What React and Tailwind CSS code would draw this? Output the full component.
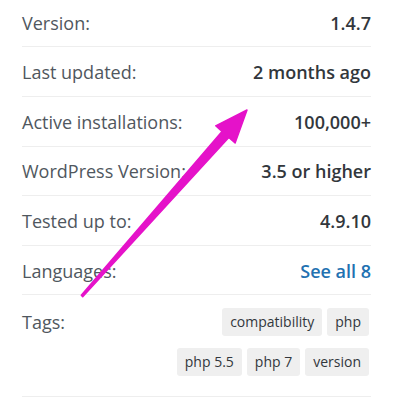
import React from 'react';

// Plugin meta sidebar: label/value rows, tag pills, and a highlight arrow on top.
const ROWS = [
  { label: 'Version:', value: '1.4.7' },
  { label: 'Last updated:', value: '2 months ago' },
  { label: 'Active installations:', value: '100,000+' },
  { label: 'WordPress Version:', value: '3.5 or higher' },
  { label: 'Tested up to:', value: '4.9.10' },
  { label: 'Languages:', value: 'See all 8', link: true },
];

const TAGS = ['compatibility', 'php', 'php 5.5', 'php 7', 'version'];

function MetaRow({ label, value, link }) {
  return (
    <li className="flex items-center justify-between h-[49.6px] pt-[2px] border-b border-[#eeeeee]">
      <span className="text-[#50575e]">{label}</span>
      {link ? (
        <a href="#" className="font-semibold text-[#2271b1]">{value}</a>
      ) : (
        <strong className="font-semibold text-[#32373c]">{value}</strong>
      )}
    </li>
  );
}

function Arrow() {
  return (
    <svg className="absolute inset-0 pointer-events-none" width="400" height="411" viewBox="0 0 400 411">
      <polygon
        fill="#e512c9"
        stroke="#e512c9"
        strokeWidth="1.5"
        strokeLinejoin="round"
        points="81.3,295.3 222.0,131.4 215.7,125.8 247,110 235.1,143.0 228.8,137.4 82.7,296.7"
      />
    </svg>
  );
}

export default function App() {
  return (
    <div className="relative w-[400px] h-[411px] overflow-hidden bg-white" style={{ fontFamily: '"Open Sans", sans-serif' }}>
      <ul className="ml-[22px] mr-[29px] mt-[-2.2px] text-[18px] leading-[27px]">
        {ROWS.map(r => (
          <MetaRow key={r.label} {...r} />
        ))}
        <li className="flex justify-between pt-[13px] pb-[20px] border-b border-[#eeeeee]">
          <span className="text-[#50575e] leading-[28px]">Tags:</span>
          <div className="flex flex-wrap justify-end gap-x-[5px] gap-y-3 w-[200px] pr-[2px]">
            {TAGS.map(t => (
              <a key={t} href="#" className="bg-[#efefef] rounded-[3px] px-2 py-1 text-[14px] leading-[20px] text-[#32373c]">
                {t}
              </a>
            ))}
          </div>
        </li>
      </ul>
      <Arrow />
    </div>
  );
}
